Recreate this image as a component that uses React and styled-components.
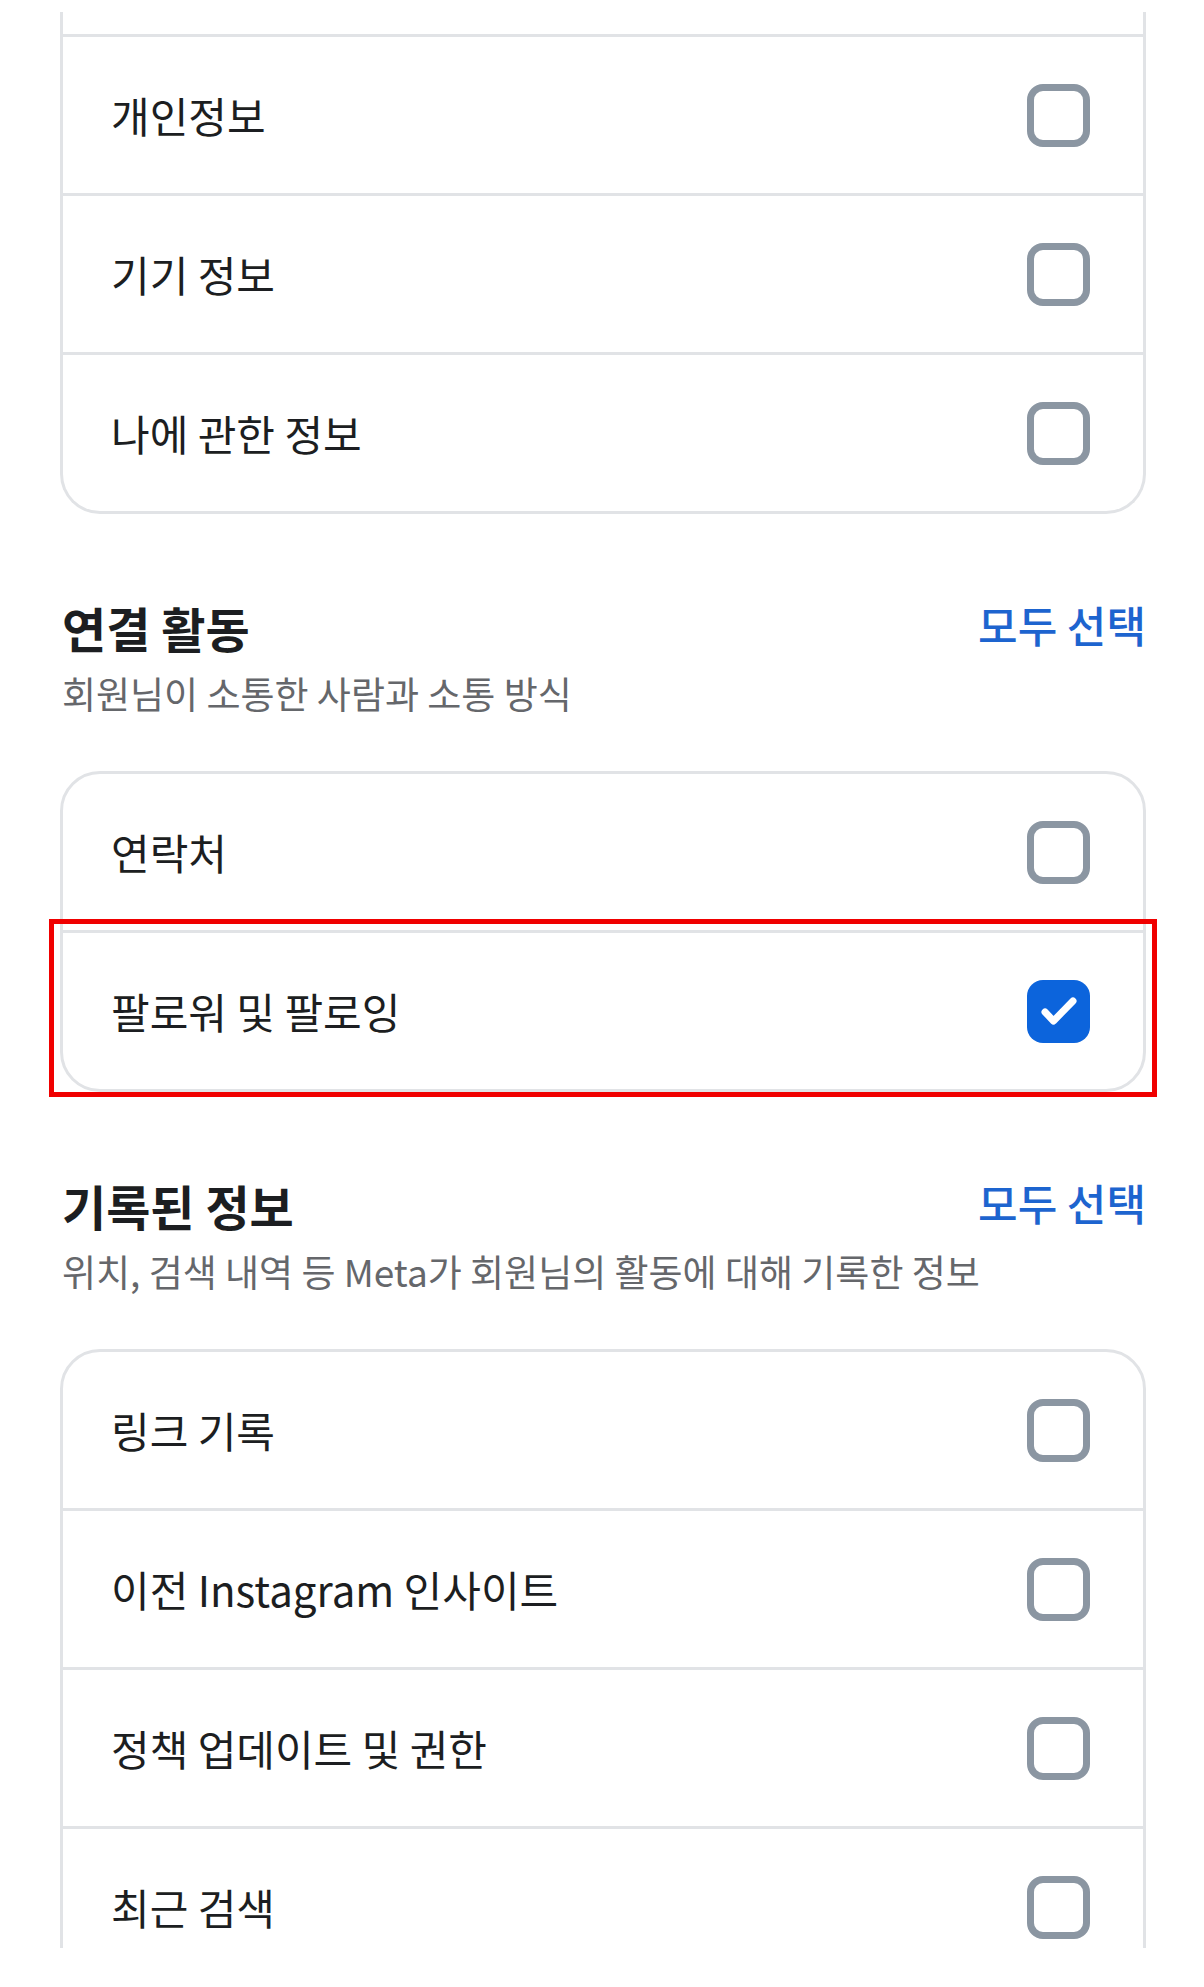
import React from 'react';
import styled, { createGlobalStyle } from 'styled-components';

const GlobalStyle = createGlobalStyle`
  html, body {
    margin: 0;
    padding: 0;
    background: #ffffff;
  }
  body {
    font-family: "Noto Sans CJK KR", "Noto Sans", sans-serif;
    color: #1c1e21;
  }
`;

const Page = styled.div`
  padding-top: 12px;
`;

const Viewport = styled.div`
  height: 1936px;
  overflow: hidden;
  padding: 0 58px 0 60px;
`;

const Card = styled.div`
  border: 3px solid #e1e3e6;
  border-radius: 40px;
  background: #ffffff;

  ${({ $cutTop }) =>
    $cutTop &&
    `
    border-top: none;
    border-top-left-radius: 0;
    border-top-right-radius: 0;
  `}
`;

const TopSliver = styled.div`
  height: 22px;
`;

const Row = styled.div`
  position: relative;
  height: 156px;
  display: flex;
  align-items: center;
  justify-content: space-between;
  padding: 0 53px 0 48px;
  border-top: ${({ $first }) => ($first ? 'none' : '3px solid #e1e3e6')};
`;

const Label = styled.span`
  font-size: 42px;
  line-height: 56px;
  color: #1c1e21;
`;

const Box = styled.span`
  box-sizing: border-box;
  width: 63px;
  height: 63px;
  flex: none;
  border-radius: 16px;
  display: flex;
  align-items: center;
  justify-content: center;
  border: ${({ $checked }) => ($checked ? 'none' : '7px solid #8b96a2')};
  background: ${({ $checked }) => ($checked ? '#0c64dc' : '#ffffff')};
`;

const Highlight = styled.div`
  position: absolute;
  top: -14px;
  left: -14px;
  right: -14px;
  bottom: -8px;
  border: 5px solid #f00000;
  pointer-events: none;
`;

const SectionHead = styled.div`
  padding: 85px 0 56px 2px;
  display: flex;
  flex-direction: column;
  gap: 16px;
`;

const TitleLine = styled.div`
  display: flex;
  align-items: center;
  justify-content: space-between;
`;

const Title = styled.h2`
  margin: 0;
  font-size: 48px;
  font-weight: 700;
  line-height: 56px;
  color: #1c1e21;
`;

const SelectAll = styled.button`
  border: none;
  background: none;
  padding: 0;
  font-family: inherit;
  font-size: 43px;
  font-weight: 500;
  line-height: 56px;
  color: #1d64cf;
  margin-top: -6px;
`;

const Subtitle = styled.p`
  margin: 0;
  font-size: 37px;
  line-height: 44px;
  color: #65676b;
`;

const Checkbox = ({ checked }) => (
  <Box $checked={checked}>
    {checked && (
      <svg width="63" height="63" viewBox="0 0 63 63">
        <path
          d="M18 32 L26.5 41 L46 21"
          fill="none"
          stroke="#ffffff"
          strokeWidth="7"
          strokeLinecap="round"
          strokeLinejoin="round"
        />
      </svg>
    )}
  </Box>
);

const Item = ({ label, checked, first, highlighted }) => (
  <Row $first={first}>
    <Label>{label}</Label>
    <Checkbox checked={checked} />
    {highlighted && <Highlight />}
  </Row>
);

const Section = ({ title, subtitle }) => (
  <SectionHead>
    <TitleLine>
      <Title>{title}</Title>
      <SelectAll>모두 선택</SelectAll>
    </TitleLine>
    <Subtitle>{subtitle}</Subtitle>
  </SectionHead>
);

const profileItems = ['개인정보', '기기 정보', '나에 관한 정보'];
const connectionItems = [
  { label: '연락처', checked: false },
  { label: '팔로워 및 팔로잉', checked: true, highlighted: true },
];
const loggedItems = [
  '링크 기록',
  '이전 Instagram 인사이트',
  '정책 업데이트 및 권한',
  '최근 검색',
];

export default function App() {
  return (
    <Page>
      <GlobalStyle />
      <Viewport>
        <Card $cutTop>
          <TopSliver />
          {profileItems.map((label) => (
            <Item key={label} label={label} />
          ))}
        </Card>

        <Section title="연결 활동" subtitle="회원님이 소통한 사람과 소통 방식" />
        <Card>
          {connectionItems.map((item, i) => (
            <Item
              key={item.label}
              label={item.label}
              checked={item.checked}
              highlighted={item.highlighted}
              first={i === 0}
            />
          ))}
        </Card>

        <Section
          title="기록된 정보"
          subtitle="위치, 검색 내역 등 Meta가 회원님의 활동에 대해 기록한 정보"
        />
        <Card>
          {loggedItems.map((label, i) => (
            <Item key={label} label={label} first={i === 0} />
          ))}
        </Card>
      </Viewport>
    </Page>
  );
}
